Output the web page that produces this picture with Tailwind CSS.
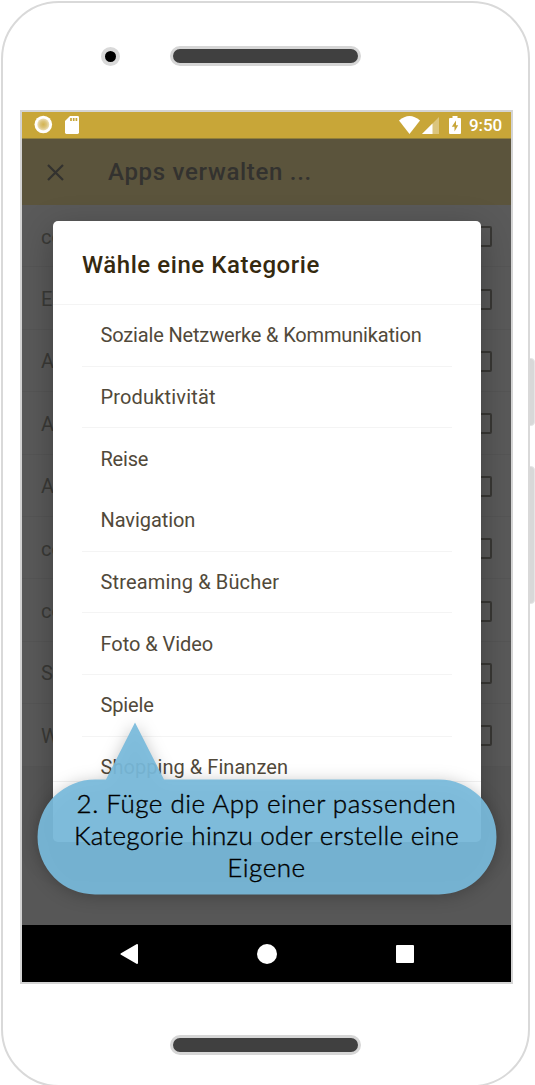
<!DOCTYPE html>
<html lang="de">
<head>
<meta charset="utf-8">
<title>Apps verwalten</title>
<script src="https://cdn.jsdelivr.net/npm/@tailwindcss/browser@4"></script>
</head>
<body class="bg-white w-[535px] h-[1085px] overflow-hidden font-['Roboto',sans-serif]">
<div class="relative w-[535px] h-[1085px] overflow-hidden pl-px pt-px">
  <!-- side buttons -->
  <div class="absolute left-[528px] top-[358px] w-[6.5px] h-[68px] rounded-r-[4px] bg-[#d8d8d8] border border-[#e6e6e6]"></div>
  <div class="absolute left-[528px] top-[466px] w-[6.5px] h-[138px] rounded-r-[4px] bg-[#d8d8d8] border border-[#e6e6e6]"></div>

  <!-- phone body -->
  <div class="relative w-[528.5px] h-[1086px] rounded-[58px] border-2 border-[#d9d9d9] bg-white flex flex-col">
    <div class="h-[107px] shrink-0 flex items-start pl-[98px] pt-[43px]">
      <div class="w-[19px] h-[19px] mt-[1px] rounded-full bg-black border-4 border-[#d9d9d9]"></div>
      <div class="ml-[50px] w-[191px] h-5 rounded-full bg-[#404040] border-3 border-[#d6d6d6]"></div>
    </div>

    <!-- screen -->
    <div class="ml-[17px] w-[493px] h-[874px] shrink-0 border-2 border-[#d4d4d4]">
      <div class="relative w-[489px] h-[870px] bg-[#575757] flex flex-col overflow-hidden">
        <div class="h-[27px] shrink-0 bg-[#c8a638] border-b border-[#92803a] flex items-center text-white">
          <svg class="ml-[12px] -mt-px" width="19" height="19" viewBox="0 0 19 19"><defs><radialGradient id="g"><stop offset="0" stop-color="#d3b351"/><stop offset=".55" stop-color="#dcc47a"/><stop offset="1" stop-color="#ecdfb8"/></radialGradient></defs><circle cx="9.3" cy="9.5" r="8.8" fill="#fff"/><circle cx="9.3" cy="9.5" r="6" fill="url(#g)"/></svg>
          <svg class="ml-[12px] -mt-px" width="14" height="18" viewBox="0 0 14 18"><path d="M5 0h7.6Q14 0 14 1.400V16.600Q14 18 12.600 18H1.400Q0 18 0 16.600V5z" fill="#fff"/><path d="M6 2v3M8.700 2v3M11.400 2v3" stroke="#c8a638" stroke-width="1.700"/></svg>
          <svg class="ml-[320px] -mt-px" width="21" height="18" viewBox="0 0 21 18"><path d="M0 4.500Q10.500-4.500 21 4.500L10.500 18z" fill="#fff"/></svg>
          <svg class="ml-[2px] -mt-px" width="17" height="18" viewBox="0 0 17 18"><path d="M17 1V18H0z" fill="#fff" fill-opacity=".35"/><path d="M10.500 7.500V18H0z" fill="#fff"/></svg>
          <svg class="ml-[10px] -mt-px" width="12" height="18" viewBox="0 0 12 18"><path d="M3.500 0h5v2H11q1 0 1 1V17q0 1-1 1H1q-1 0-1-1V3q0-1 1-1h2.500z" fill="#fff"/><path d="M7 4.500L2.800 10.700H5.500V15.500L9.200 9.300H7z" fill="#c8a638"/></svg>
          <span class="ml-[8px] text-[17px] font-medium leading-none tracking-[-0.1px]">9:50</span>
        </div>
        <div class="h-[66px] shrink-0 bg-[#5b543c] flex items-center text-[#33322f]">
          <svg class="ml-[25px]" width="17" height="17" viewBox="0 0 17 17"><path d="M1 1L16 16M16 1L1 16" stroke="#33322f" stroke-width="2.200"/></svg>
          <span class="ml-[44px] text-[24px] font-medium leading-none tracking-[0.700px] whitespace-nowrap">Apps verwalten ...</span>
        </div>
        <div class="bg-[#5a5a5a] shrink-0 text-[#3b3a37] text-[20px]">
          <div class="h-[62.400px] border-b border-[#565656] flex items-center justify-between pl-[19px] pr-[19px] pt-[2px]"><span>com</span><i class="size-[21px] rounded-[2px] border-2 border-[#393835]"></i></div>
          <div class="h-[62.400px] border-b border-[#565656] flex items-center justify-between pl-[19px] pr-[19px] pt-[2px]"><span>E</span><i class="size-[21px] rounded-[2px] border-2 border-[#393835]"></i></div>
          <div class="h-[62.400px] border-b border-[#565656] flex items-center justify-between pl-[19px] pr-[19px] pt-[2px]"><span>A</span><i class="size-[21px] rounded-[2px] border-2 border-[#393835]"></i></div>
          <div class="h-[62.400px] border-b border-[#565656] flex items-center justify-between pl-[19px] pr-[19px] pt-[2px]"><span>A</span><i class="size-[21px] rounded-[2px] border-2 border-[#393835]"></i></div>
          <div class="h-[62.400px] border-b border-[#565656] flex items-center justify-between pl-[19px] pr-[19px] pt-[2px]"><span>A</span><i class="size-[21px] rounded-[2px] border-2 border-[#393835]"></i></div>
          <div class="h-[62.400px] border-b border-[#565656] flex items-center justify-between pl-[19px] pr-[19px] pt-[2px]"><span>com</span><i class="size-[21px] rounded-[2px] border-2 border-[#393835]"></i></div>
          <div class="h-[62.400px] border-b border-[#565656] flex items-center justify-between pl-[19px] pr-[19px] pt-[2px]"><span>com</span><i class="size-[21px] rounded-[2px] border-2 border-[#393835]"></i></div>
          <div class="h-[62.400px] border-b border-[#565656] flex items-center justify-between pl-[19px] pr-[19px] pt-[2px]"><span>S</span><i class="size-[21px] rounded-[2px] border-2 border-[#393835]"></i></div>
          <div class="h-[62.400px] border-b border-[#565656] flex items-center justify-between pl-[19px] pr-[19px] pt-[2px]"><span>W</span><i class="size-[21px] rounded-[2px] border-2 border-[#393835]"></i></div>
        </div>

        <!-- category dialog -->
        <div class="absolute left-[31px] top-[109px] w-[428px] h-[621px] bg-white rounded-[5px] shadow-[0_10px_34px_rgba(0,0,0,0.3)] text-[#51493a] text-[20px] flex flex-col whitespace-nowrap">
          <div class="h-[84px] shrink-0 border-b border-[#f4f4f4] pl-[29px] pt-[5px] flex items-center text-[24px] font-medium text-[#35290f]"><span class="tracking-[0.560px]">Wähle eine Kategorie</span></div>
          <div class="px-[29px] h-[476px] shrink-0 overflow-hidden">
            <div class="h-[61.700px] pl-[18.500px] flex items-center border-b border-[#f4f4f4] tracking-[-0.160px]">Soziale Netzwerke &amp; Kommunikation</div>
            <div class="h-[61.700px] pl-[18.500px] flex items-center border-b border-[#f4f4f4] tracking-[0.170px]">Produktivität</div>
            <div class="h-[61.700px] pl-[18.500px] flex items-center border-b border-transparent tracking-[-0.200px]">Reise</div>
            <div class="h-[61.700px] pl-[18.500px] flex items-center border-b border-[#f4f4f4] tracking-[-0.080px]">Navigation</div>
            <div class="h-[61.700px] pl-[18.500px] flex items-center border-b border-[#f4f4f4] tracking-[0.150px]">Streaming &amp; Bücher</div>
            <div class="h-[61.700px] pl-[18.500px] flex items-center border-b border-[#f4f4f4] tracking-[-0.050px]">Foto &amp; Video</div>
            <div class="h-[61.700px] pl-[18.500px] flex items-center border-b border-[#f4f4f4] tracking-[-0.150px]">Spiele</div>
            <div class="h-[61.700px] pl-[18.500px] pb-px flex items-center tracking-[0.050px]">Shopping &amp; Finanzen</div>
          </div>
          <div class="grow border-t border-[#f0f0f0]"></div>
        </div>

        <!-- navigation bar -->
        <div class="mt-auto h-[57px] shrink-0 bg-black flex items-center">
          <svg class="ml-[98px]" width="19" height="20" viewBox="0 0 19 20"><path d="M1.500 10L17 1V19z" fill="#fff" stroke="#fff" stroke-width="2" stroke-linejoin="round"/></svg>
          <div class="ml-[118px] size-[20px] rounded-full bg-white"></div>
          <div class="ml-[119px] size-[18px] rounded-[1px] bg-white"></div>
        </div>
      </div>
    </div>

    <div class="mt-[51px] ml-[167px] w-[191px] h-5 shrink-0 rounded-full bg-[#404040] border-3 border-[#d6d6d6]"></div>
  </div>

  <!-- hint bubble -->
  <div class="absolute left-[37px] top-[722px] w-[460px] h-[173px]">
    <svg class="absolute inset-0 overflow-visible drop-shadow-[0_2px_8px_rgba(0,0,0,0.25)]" width="460" height="173" viewBox="0 0 460 173"><path d="M98 .5L127 57.500H402A57.300 57.300 0 0 1 402 172.500H58A57.300 57.300 0 0 1 58 57.500H69z" fill="#78badc" fill-opacity=".93"/></svg>
    <div class="relative pt-[65px] pr-px text-center text-[26px] font-light leading-[32px] text-black font-['Lato',sans-serif] whitespace-nowrap [-webkit-text-stroke:0.4px_black]">
      <div class="tracking-[0.500px]">2. Füge die App einer passenden</div>
      <div class="tracking-[0.290px]">Kategorie hinzu oder erstelle eine</div>
      <div class="tracking-[0.500px]">Eigene</div>
    </div>
  </div>
</div>
</body>
</html>
